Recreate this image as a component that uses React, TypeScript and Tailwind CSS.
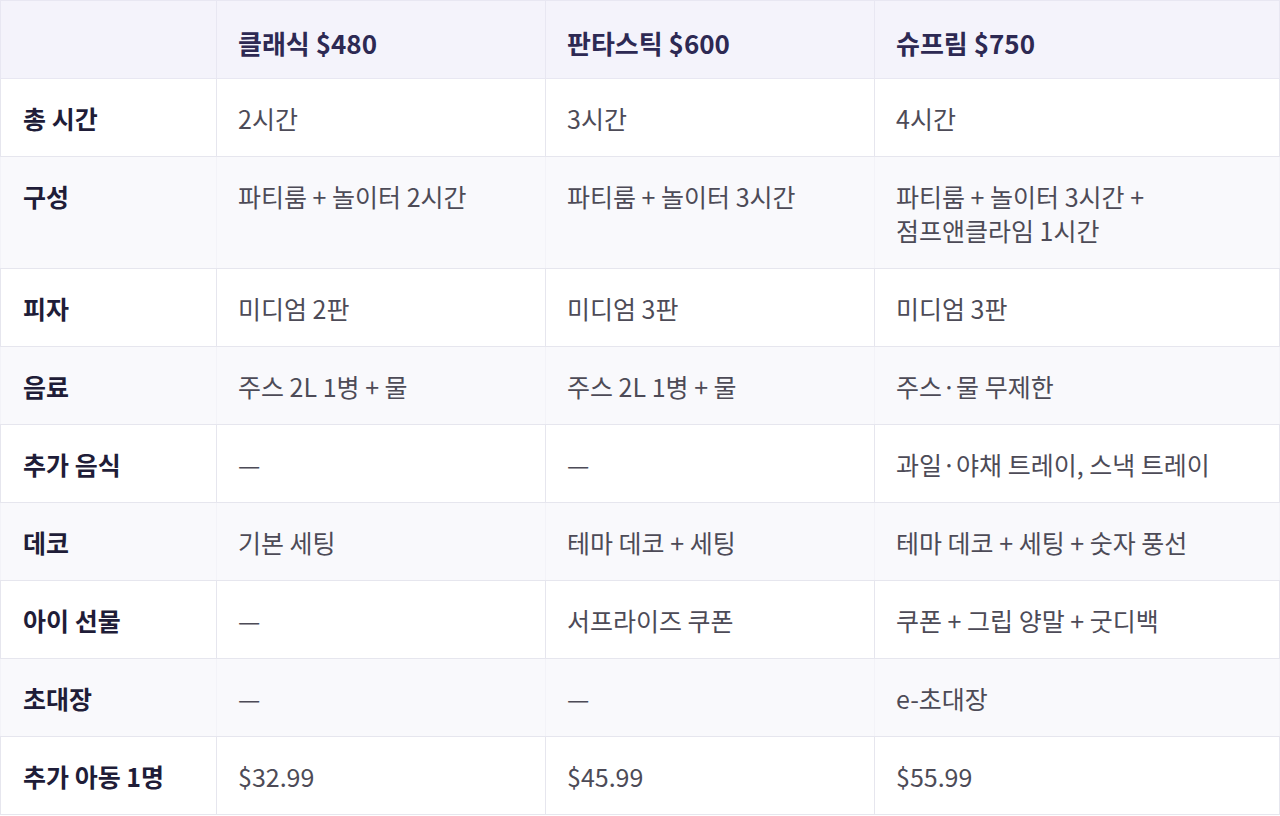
const headers = ['클래식 $480', '판타스틱 $600', '슈프림 $750']

const rows: [string, string, string, string[]][] = [
  ['총 시간', '2시간', '3시간', ['4시간']],
  ['구성', '파티룸 + 놀이터 2시간', '파티룸 + 놀이터 3시간', ['파티룸 + 놀이터 3시간 +', '점프앤클라임 1시간']],
  ['피자', '미디엄 2판', '미디엄 3판', ['미디엄 3판']],
  ['음료', '주스 2L 1병 + 물', '주스 2L 1병 + 물', ['주스·물 무제한']],
  ['추가 음식', '—', '—', ['과일·야채 트레이, 스낵 트레이']],
  ['데코', '기본 세팅', '테마 데코 + 세팅', ['테마 데코 + 세팅 + 숫자 풍선']],
  ['아이 선물', '—', '서프라이즈 쿠폰', ['쿠폰 + 그립 양말 + 굿디백']],
  ['초대장', '—', '—', ['e-초대장']],
  ['추가 아동 1명', '$32.99', '$45.99', ['$55.99']],
]

export default function App() {
  return (
    <div className="w-[1280px] h-[816px] bg-white font-['Noto_Sans_CJK_KR','Noto_Sans',sans-serif]">
      <table className="w-full border-collapse border border-[#e6e6ee] table-fixed">
        <colgroup>
          <col className="w-[216px]" />
          <col className="w-[329px]" />
          <col className="w-[329px]" />
          <col />
        </colgroup>
        <thead>
          <tr className="bg-[#f4f3fb]">
            <th className="border border-[#e8e7f2] px-[22px] pt-[25px] pb-[18px] leading-[34px]"></th>
            {headers.map((h) => (
              <th
                key={h}
                className="border border-[#e8e7f2] px-[21px] pt-[25px] pb-[18px] text-left text-[26px] leading-[34px] font-bold text-[#2d2953]"
              >
                {h}
              </th>
            ))}
          </tr>
        </thead>
        <tbody>
          {rows.map(([label, a, b, c], i) => {
            const shaded = i % 2 === 1
            const cell = shaded
              ? 'border-y border-y-[#e6e6ee] border-x border-x-[#f3f3f8]'
              : 'border border-[#e6e6ee]'
            return (
              <tr key={label} className={shaded ? 'bg-[#f9f9fc]' : 'bg-white'}>
                <td className={`${cell} px-[22px] pt-[22px] pb-[21px] align-top text-[25px] leading-[34px] font-bold text-[#1f1d38]`}>
                  {label}
                </td>
                <td className={`${cell} px-[21px] pt-[22px] pb-[21px] align-top text-[25px] leading-[34px] text-[#4d4b57]`}>{a}</td>
                <td className={`${cell} px-[21px] pt-[22px] pb-[21px] align-top text-[25px] leading-[34px] text-[#4d4b57]`}>{b}</td>
                <td className={`${cell} px-[21px] pt-[22px] pb-[21px] align-top text-[25px] leading-[34px] text-[#4d4b57]`}>
                  {c.map((line) => (
                    <div key={line}>{line}</div>
                  ))}
                </td>
              </tr>
            )
          })}
        </tbody>
      </table>
    </div>
  )
}
